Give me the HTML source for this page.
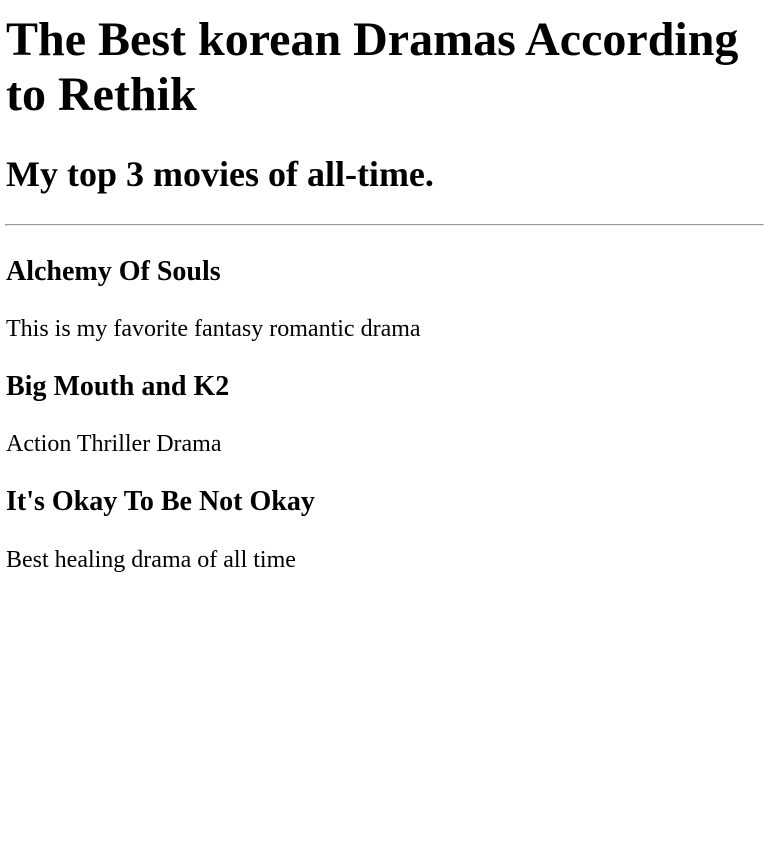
<!DOCTYPE html>
<html><head><meta charset="utf-8"><style>
html,body{margin:0;padding:0;background:#fff;width:775px;height:868px;overflow:hidden}
body{font-family:"Liberation Serif",serif;color:#000;position:relative}
.t{position:absolute;left:6px;margin:0;line-height:normal;white-space:nowrap}
h1.t{font-size:48px;font-weight:bold;white-space:normal;width:765px}
h2.t{font-size:36px;font-weight:bold}
h3.t{font-size:28px;font-weight:bold}
p.t{font-size:24px}
.hr{position:absolute;left:5px;top:224px;width:757px;height:0;border-top:1px solid #9a9a9a;border-bottom:1px solid #eeeeee;border-left:1px solid #9a9a9a;border-right:1px solid #eeeeee}
</style></head><body>
<h1 class="t" style="top:12px">The Best korean Dramas According to Rethik</h1>
<h2 class="t" style="top:153px">My top 3 movies of all-time.</h2>
<div class="hr"></div>
<h3 class="t" style="top:256px">Alchemy Of Souls</h3>
<p class="t" style="top:316px">This is my favorite fantasy romantic drama</p>
<h3 class="t" style="top:371px">Big Mouth and K2</h3>
<p class="t" style="top:431px">Action Thriller Drama</p>
<h3 class="t" style="top:486px">It's Okay To Be Not Okay</h3>
<p class="t" style="top:547px">Best healing drama of all time</p>
</body></html>
